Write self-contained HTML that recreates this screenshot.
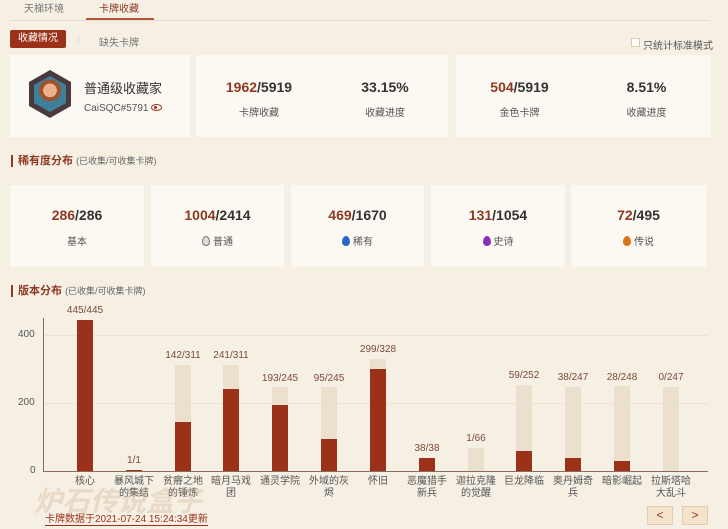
<!DOCTYPE html>
<html><head><meta charset="utf-8"><style>
*{margin:0;padding:0;box-sizing:border-box}
body{width:728px;height:529px;background:#f6efe4;font-family:"Liberation Sans","Noto Sans CJK SC",sans-serif;position:relative;overflow:hidden;color:#333}
.a{position:absolute}
.card{position:absolute;background:#fcf9f3}
.num{font-size:14px;font-weight:bold;color:#333;text-align:center;position:absolute;width:100%}
.num b{color:#8e3a22}
.lbl{font-size:10px;color:#555;text-align:center;position:absolute;width:100%}
.h{font-size:11px;font-weight:bold;color:#8e3a22;border-left:2px solid #8e3a22;padding-left:5px;line-height:12px}
.h span{font-weight:normal;color:#666;font-size:9px}
.bar{position:absolute;width:16px;bottom:0}
.g{background:#ebe0cd}.r{background:#9b3119}
.bl{position:absolute;font-size:10px;color:#7a4a3a;width:60px;text-align:center;margin-left:-30px}
.xl{position:absolute;font-size:10px;color:#555;width:48px;text-align:center;margin-left:-24px;line-height:12px;top:476px}
.gem{display:inline-block;width:8px;height:10px;border-radius:50% 50% 50% 50%/60% 60% 40% 40%;vertical-align:-1px;margin-right:3px}
</style></head><body>
<div class="a" style="left:24px;top:0;font-size:10px;color:#777">天梯环境</div>
<div class="a" style="left:99px;top:0;font-size:10px;color:#8e3a22">卡牌收藏</div>
<div class="a" style="left:86px;top:18px;width:68px;height:2px;background:#b0583e"></div>
<div class="a" style="left:10px;top:20px;width:700px;height:1px;background:#e8dccb"></div>
<div class="a" style="left:10px;top:30px;width:56px;height:18px;background:#9b3119;color:#fff;font-size:10px;line-height:18px;text-align:center;border-radius:2px">收藏情况</div>
<div class="a" style="left:78px;top:35px;width:1px;height:9px;background:#ddd"></div>
<div class="a" style="left:99px;top:34px;font-size:10px;color:#777">缺失卡牌</div>
<div class="a" style="left:631px;top:38px;width:9px;height:9px;border:1px solid #d9c9b0;background:#fff"></div>
<div class="a" style="left:643px;top:37px;font-size:10px;color:#555">只统计标准模式</div>

<div class="card" style="left:10px;top:55px;width:180px;height:82px">
 <div class="a" style="left:19px;top:15px;width:42px;height:48px;background:#4a3a40;clip-path:polygon(50% 0,100% 25%,100% 75%,50% 100%,0 75%,0 25%)"></div>
 <div class="a" style="left:24px;top:21px;width:32px;height:36px;background:radial-gradient(circle at 50% 40%,#e9b48c 0 25%,#a0522d 26% 40%,#3e7f9a 41%);clip-path:polygon(50% 0,100% 25%,100% 75%,50% 100%,0 75%,0 25%)"></div>
 <div class="a" style="left:74px;top:23px;font-size:13px;color:#333">普通级收藏家</div>
 <div class="a" style="left:74px;top:48px;font-size:10px;color:#555">CaiSQC#5791 <span style="display:inline-block;width:11px;height:7px;border:1.5px solid #9b3119;border-radius:50%;vertical-align:0;position:relative"><span style="position:absolute;left:2px;top:0.5px;width:3px;height:3px;background:#9b3119;border-radius:50%"></span></span></div>
</div>
<div class="card" style="left:196px;top:55px;width:252px;height:82px">
 <div style="position:absolute;left:0;width:126px;height:100%"><div class="num" style="top:24px"><b>1962</b>/5919</div><div class="lbl" style="top:49px">卡牌收藏</div></div>
 <div style="position:absolute;left:126px;width:126px;height:100%"><div class="num" style="top:24px">33.15%</div><div class="lbl" style="top:49px">收藏进度</div></div>
</div>
<div class="card" style="left:456px;top:55px;width:255px;height:82px">
 <div style="position:absolute;left:0;width:127px;height:100%"><div class="num" style="top:24px"><b>504</b>/5919</div><div class="lbl" style="top:49px">金色卡牌</div></div>
 <div style="position:absolute;left:127px;width:127px;height:100%"><div class="num" style="top:24px">8.51%</div><div class="lbl" style="top:49px">收藏进度</div></div>
</div>

<div class="a h" style="left:11px;top:155px">稀有度分布 <span>(已收集/可收集卡牌)</span></div>
<div class="card" style="left:10px;top:185px;width:134px;height:82px"><div class="num" style="top:22px"><b>286</b>/286</div><div class="lbl" style="top:48px">基本</div></div>
<div class="card" style="left:151px;top:185px;width:133px;height:82px"><div class="num" style="top:22px"><b>1004</b>/2414</div><div class="lbl" style="top:48px"><i class="gem" style="background:#ddd;border:1px solid #777"></i>普通</div></div>
<div class="card" style="left:291px;top:185px;width:133px;height:82px"><div class="num" style="top:22px"><b>469</b>/1670</div><div class="lbl" style="top:48px"><i class="gem" style="background:#2a68c8"></i>稀有</div></div>
<div class="card" style="left:431px;top:185px;width:134px;height:82px"><div class="num" style="top:22px"><b>131</b>/1054</div><div class="lbl" style="top:48px"><i class="gem" style="background:#8a2fb8"></i>史诗</div></div>
<div class="card" style="left:571px;top:185px;width:135px;height:82px"><div class="num" style="top:22px"><b>72</b>/495</div><div class="lbl" style="top:48px"><i class="gem" style="background:#d6761a"></i>传说</div></div>

<div class="a h" style="left:11px;top:285px">版本分布 <span>(已收集/可收集卡牌)</span></div>

<div class="a" style="left:43px;top:318px;width:1px;height:154px;background:#8a6a5a"></div>
<div class="a" style="left:43px;top:471px;width:665px;height:1px;background:#8a6a5a"></div>
<div class="a" style="left:44px;top:335px;width:664px;height:1px;background:#eee3d2"></div>
<div class="a" style="left:44px;top:403px;width:664px;height:1px;background:#eee3d2"></div>
<div class="a" style="left:18px;top:329px;font-size:10px;color:#555">400</div>
<div class="a" style="left:18px;top:397px;font-size:10px;color:#555">200</div>
<div class="a" style="left:30px;top:465px;font-size:10px;color:#555">0</div>

<div class="a" style="left:0;top:0;width:728px;height:471px">
<div class="bar r" style="left:77px;height:151px"></div>
<div class="bar r" style="left:126px;height:1px"></div>
<div class="bar g" style="left:175px;height:106px"></div><div class="bar r" style="left:175px;height:49px"></div>
<div class="bar g" style="left:223px;height:106px"></div><div class="bar r" style="left:223px;height:82px"></div>
<div class="bar g" style="left:272px;height:84px"></div><div class="bar r" style="left:272px;height:66px"></div>
<div class="bar g" style="left:321px;height:84px"></div><div class="bar r" style="left:321px;height:32px"></div>
<div class="bar g" style="left:370px;height:112px"></div><div class="bar r" style="left:370px;height:102px"></div>
<div class="bar r" style="left:419px;height:13px"></div>
<div class="bar g" style="left:468px;height:23px"></div>
<div class="bar g" style="left:516px;height:86px"></div><div class="bar r" style="left:516px;height:20px"></div>
<div class="bar g" style="left:565px;height:84px"></div><div class="bar r" style="left:565px;height:13px"></div>
<div class="bar g" style="left:614px;height:85px"></div><div class="bar r" style="left:614px;height:10px"></div>
<div class="bar g" style="left:663px;height:84px"></div>
</div>
<div class="bl" style="left:85px;top:305px">445/445</div>
<div class="bl" style="left:134px;top:455px">1/1</div>
<div class="bl" style="left:183px;top:350px">142/311</div>
<div class="bl" style="left:231px;top:350px">241/311</div>
<div class="bl" style="left:280px;top:373px">193/245</div>
<div class="bl" style="left:329px;top:373px">95/245</div>
<div class="bl" style="left:378px;top:344px">299/328</div>
<div class="bl" style="left:427px;top:443px">38/38</div>
<div class="bl" style="left:476px;top:433px">1/66</div>
<div class="bl" style="left:524px;top:370px">59/252</div>
<div class="bl" style="left:573px;top:372px">38/247</div>
<div class="bl" style="left:622px;top:372px">28/248</div>
<div class="bl" style="left:671px;top:372px">0/247</div>

<div class="xl" style="left:85px">核心</div>
<div class="xl" style="left:134px">暴风城下的集结</div>
<div class="xl" style="left:183px">贫瘠之地的锤炼</div>
<div class="xl" style="left:231px">暗月马戏团</div>
<div class="xl" style="left:280px">通灵学院</div>
<div class="xl" style="left:329px">外域的灰烬</div>
<div class="xl" style="left:378px">怀旧</div>
<div class="xl" style="left:427px">恶魔猎手新兵</div>
<div class="xl" style="left:476px">迦拉克隆的觉醒</div>
<div class="xl" style="left:524px">巨龙降临</div>
<div class="xl" style="left:573px">奥丹姆奇兵</div>
<div class="xl" style="left:622px">暗影崛起</div>
<div class="xl" style="left:671px">拉斯塔哈大乱斗</div>

<div class="a" style="left:34px;top:480px;font-size:28px;font-style:italic;font-weight:bold;color:rgba(200,170,130,0.3)">炉石传说盒子</div>
<div class="a" style="left:45px;top:514px;font-size:10px;color:#9b3119;border-bottom:1px solid #9b3119;line-height:11px">卡牌数据于2021-07-24 15:24:34更新</div>
<div class="a" style="left:647px;top:506px;width:26px;height:19px;background:#f3e3cc;border:1px solid #e0ccb0;color:#8e3a22;text-align:center;font-size:12px;line-height:17px">&lt;</div>
<div class="a" style="left:682px;top:506px;width:26px;height:19px;background:#f3e3cc;border:1px solid #e0ccb0;color:#8e3a22;text-align:center;font-size:12px;line-height:17px">&gt;</div>
</body></html>
